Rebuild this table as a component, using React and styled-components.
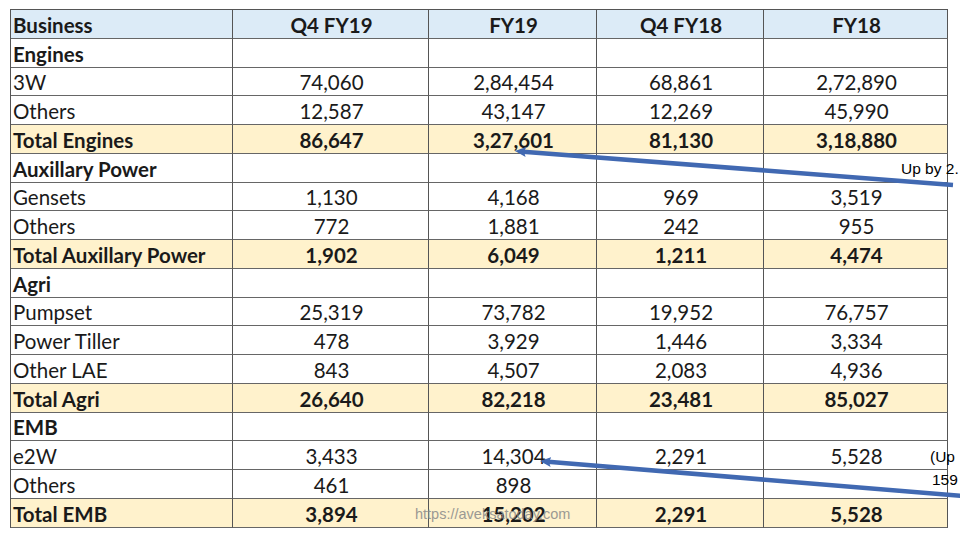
import React from 'react';
import styled, { createGlobalStyle } from 'styled-components';

const GlobalStyle = createGlobalStyle`
    body {
        margin: 0;
        background: #fff;
        font-family: Lato, "Open Sans", sans-serif;
    }
`

const rows = [
    { kind: 'section', label: 'Engines' },
    { kind: 'item', label: '3W', values: ['74,060', '2,84,454', '68,861', '2,72,890'] },
    { kind: 'item', label: 'Others', values: ['12,587', '43,147', '12,269', '45,990'] },
    { kind: 'total', label: 'Total Engines', values: ['86,647', '3,27,601', '81,130', '3,18,880'] },
    { kind: 'section', label: 'Auxillary Power' },
    { kind: 'item', label: 'Gensets', values: ['1,130', '4,168', '969', '3,519'] },
    { kind: 'item', label: 'Others', values: ['772', '1,881', '242', '955'] },
    { kind: 'total', label: 'Total Auxillary Power', values: ['1,902', '6,049', '1,211', '4,474'] },
    { kind: 'section', label: 'Agri' },
    { kind: 'item', label: 'Pumpset', values: ['25,319', '73,782', '19,952', '76,757'] },
    { kind: 'item', label: 'Power Tiller', values: ['478', '3,929', '1,446', '3,334'] },
    { kind: 'item', label: 'Other LAE', values: ['843', '4,507', '2,083', '4,936'] },
    { kind: 'total', label: 'Total Agri', values: ['26,640', '82,218', '23,481', '85,027'] },
    { kind: 'section', label: 'EMB' },
    { kind: 'item', label: 'e2W', values: ['3,433', '14,304', '2,291', '5,528'] },
    { kind: 'item', label: 'Others', values: ['461', '898', '', ''] },
    { kind: 'total', label: 'Total EMB', values: ['3,894', '15,202', '2,291', '5,528'] },
];

const columns = ['Q4 FY19', 'FY19', 'Q4 FY18', 'FY18'];

// callouts drawn over the table, in page pixels
const notes = [
    { top: 160, left: 901, text: 'Up by 2.' },
    { top: 448, left: 930, text: '(Up' },
    { top: 471, left: 932, text: '159' },
];

const App = () => {
    return (
        <Page>
            <GlobalStyle />
            <Sheet>
                <Table>
                    <Cell kind="header" align="left">Business</Cell>
                    {columns.map(c => <Cell key={c} kind="header">{c}</Cell>)}
                    {rows.map((row, i) => (
                        <React.Fragment key={i}>
                            <Cell kind={row.kind} align="left">{row.label}</Cell>
                            {[0, 1, 2, 3].map(j => (
                                <Cell key={j} kind={row.kind}>{row.values ? row.values[j] : ''}</Cell>
                            ))}
                        </React.Fragment>
                    ))}
                </Table>
                <Arrows width="960" height="540" viewBox="0 0 960 540">
                    <defs>
                        <marker id="head" markerUnits="userSpaceOnUse" markerWidth="11" markerHeight="10" refX="6" refY="5" orient="auto">
                            <path d="M0,0 L11,5 L0,10 L2,5 Z" fill="#4169b2" />
                        </marker>
                    </defs>
                    <line x1="953" y1="185" x2="520" y2="151.5" stroke="#4169b2" strokeWidth="4.5" markerEnd="url(#head)" />
                    <line x1="962" y1="496" x2="545" y2="461.5" stroke="#4169b2" strokeWidth="4.5" markerEnd="url(#head)" />
                </Arrows>
                {notes.map(n => <Note key={n.text} top={n.top} left={n.left}>{n.text}</Note>)}
                <Watermark>https://aveksatoday.com</Watermark>
            </Sheet>
        </Page>
    )
};

export default App;

const Page = styled.div`
    width: 960px;
    height: 540px;
    overflow: hidden;
    padding: 9px 0 0 10px;
    box-sizing: border-box;
`

const Sheet = styled.div`
    position: relative;
    width: 938px;
`

const Table = styled.div`
    display: grid;
    grid-template-columns: 222px 196px 168px 167px 184px;
    grid-auto-rows: 28.75px;
    border-top: 1px solid #555;
    border-left: 1px solid #555;
    width: max-content;
`

const Cell = styled.div`
    display: flex;
    align-items: center;
    justify-content: ${p => p.align === 'left' ? 'flex-start' : 'center'};
    padding: 2px 0 0 2px;
    box-sizing: border-box;
    border-right: 1px solid #555;
    border-bottom: 1px solid #666;
    font-size: 20.5px;
    color: #1a1a1a;
    white-space: nowrap;
    font-weight: ${p => (p.kind === 'item' ? 400 : 700)};
    background: ${p => p.kind === 'header' ? '#dcebf7' : p.kind === 'total' ? '#fff2cc' : '#fff'};
`

const Arrows = styled.svg`
    position: absolute;
    left: -10px;
    top: -9px;
    pointer-events: none;
    overflow: visible;
`

const Note = styled.span`
    position: absolute;
    top: ${p => p.top - 9}px;
    left: ${p => p.left - 10}px;
    font-family: "Liberation Sans", Arial, sans-serif;
    font-size: 15.5px;
    color: #000;
    white-space: nowrap;
`

const Watermark = styled.span`
    position: absolute;
    left: 405px;
    top: 497px;
    font-family: "Liberation Sans", Arial, sans-serif;
    font-size: 14.5px;
    color: #8a8a8a;
    opacity: 0.85;
`
